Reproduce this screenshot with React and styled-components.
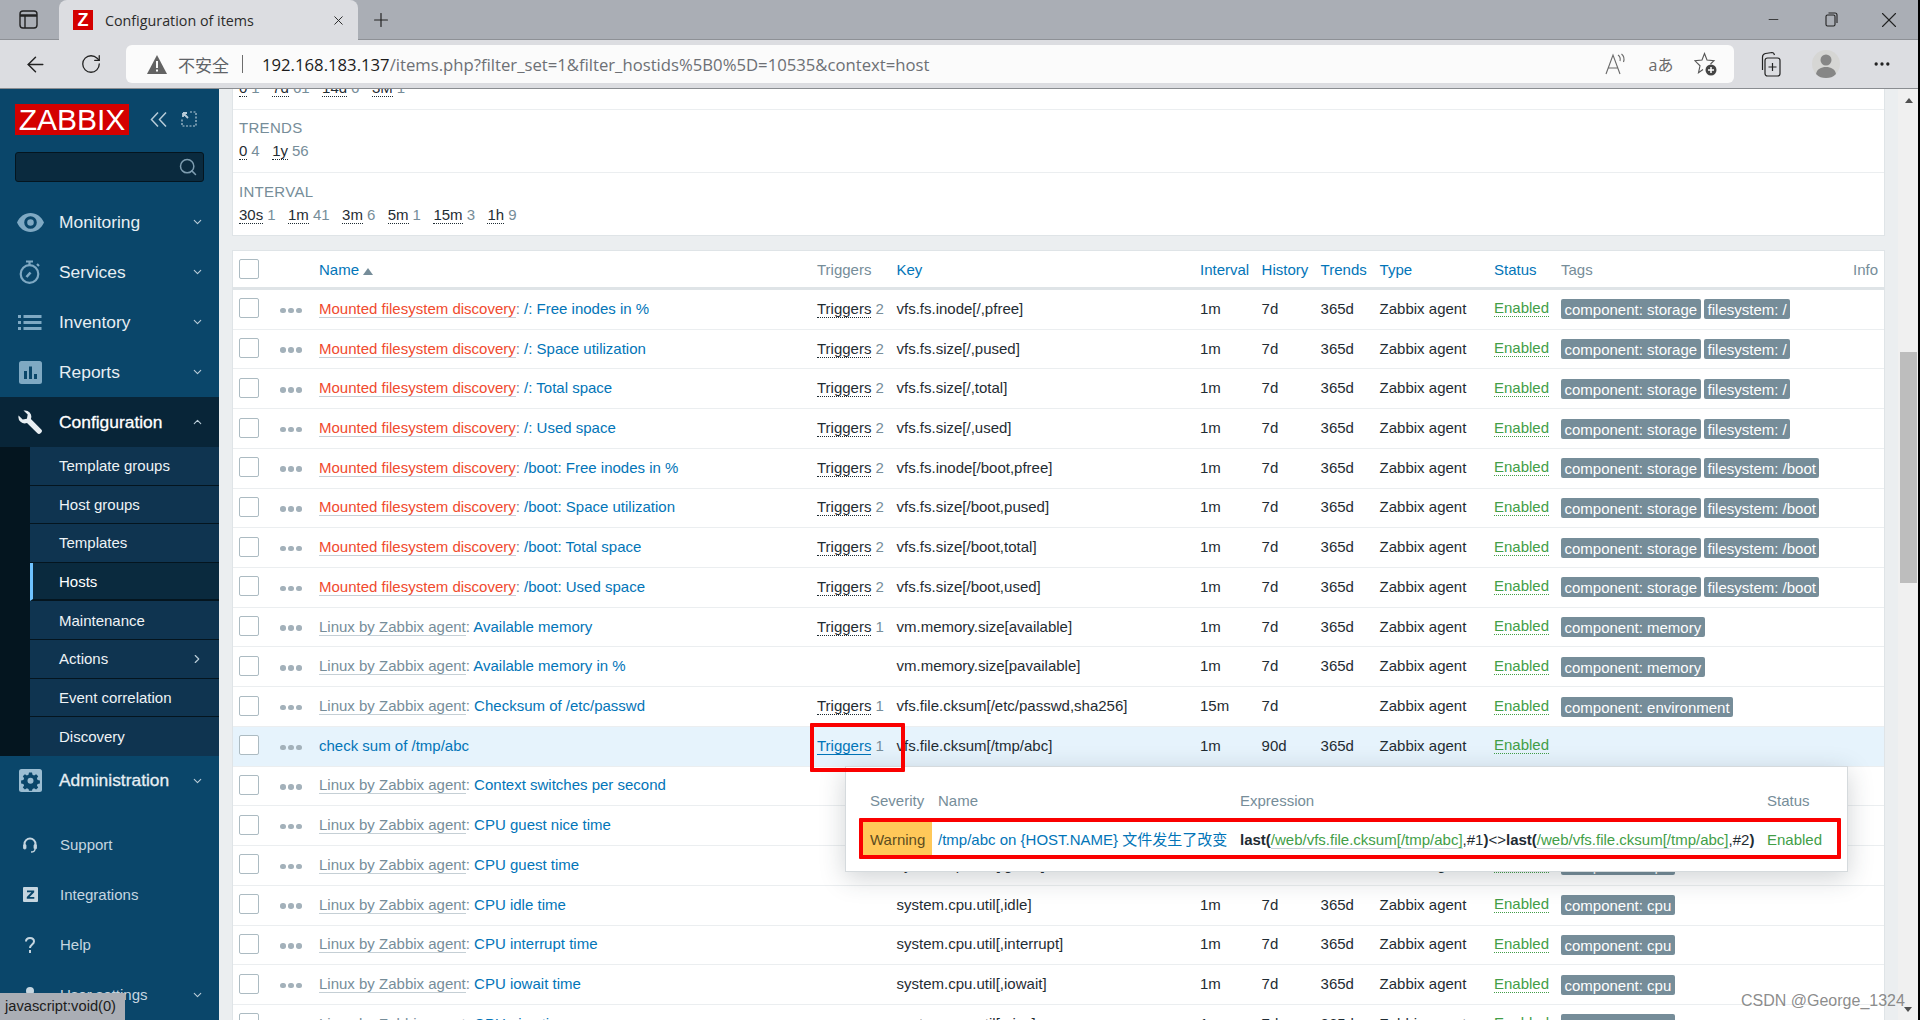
import React from "react";
import styled, { createGlobalStyle } from "styled-components";
import { ArrowLeft, RotateCw, MoreHorizontal, Plus, X, Minus, ChevronDown, ChevronUp, ChevronRight, Search } from "lucide-react";

const GlobalStyle = createGlobalStyle`
  html, body { margin: 0; padding: 0; height: 100%; overflow: hidden; }
  * { box-sizing: border-box; }
  body { font-family: "Liberation Sans", Arial, sans-serif; font-size: 15px; color: #1f2c33; }
`;

const CJK = `"Noto Sans CJK SC", sans-serif`;

const Page = styled.div`
  position: relative;
  width: 1920px;
  height: 1020px;
  overflow: hidden;
  display: flex;
  flex-direction: column;
  border-right: 2px solid #000;
`;

/* browser chrome */
const TabStrip = styled.div`
  height: 40px;
  background: #aaaeb5;
  border-bottom: 1px solid #8e9196;
  display: flex;
  align-items: stretch;
  flex-shrink: 0;
`;
const TabActions = styled.div`
  width: 59px;
  display: flex;
  align-items: center;
  justify-content: center;
  padding-right: 2px;
`;
const Tab = styled.div`
  width: 299px;
  height: 40px;
  background: #dcdde1;
  border-radius: 8px 8px 0 0;
  display: flex;
  align-items: center;
  padding: 0 12px 0 14px;
  font-family: "Open Sans", sans-serif;
  font-size: 14.3px;
  color: #2b2b2b;
`;
const Favicon = styled.div`
  width: 20px;
  height: 20px;
  background: #d40000;
  color: #fff;
  font: 700 18px/20px "Liberation Sans", sans-serif;
  text-align: center;
  margin-right: 12px;
`;
const TabTitle = styled.span`
  flex: 1;
`;
const NewTab = styled.div`
  width: 46px;
  display: flex;
  align-items: center;
  justify-content: center;
`;
const Grow = styled.div`
  flex: 1;
`;
const WinButton = styled.div`
  width: 58px;
  display: flex;
  align-items: center;
  justify-content: center;
`;
const Toolbar = styled.div`
  height: 49px;
  background: #dcdde1;
  border-bottom: 1px solid #8a8d91;
  display: flex;
  align-items: flex-start;
  padding: 5px 8px 0 8px;
  flex-shrink: 0;
`;
const ToolButton = styled.div`
  width: ${(p) => p.$w || 55}px;
  height: 38px;
  display: flex;
  align-items: center;
  justify-content: center;
  flex-shrink: 0;
`;
const AddressBar = styled.div`
  width: 1608px;
  height: 38px;
  margin-left: 8px;
  margin-right: 8px;
  background: #fbfbfb;
  border-radius: 6px;
  display: flex;
  align-items: center;
  padding-left: 21px;
  padding-right: 7px;
`;
const Insecure = styled.span`
  font-family: "Open Sans", ${CJK};
  font-size: 17px;
  color: #5f6368;
  margin-left: 11px;
`;
const AddrSep = styled.div`
  width: 1px;
  height: 18px;
  background: #6d6d6d;
  margin: 0 19px 0 13px;
`;
const Url = styled.div`
  font-family: "Open Sans", sans-serif;
  font-size: 16.7px;
  color: #6d7075;
  white-space: nowrap;
  flex: 1;
  b { font-weight: 400; color: #1c1c1c; }
`;
const AddrIcon = styled.div`
  width: 44px;
  height: 38px;
  display: flex;
  align-items: center;
  justify-content: center;
  color: #6a6a6a;
  font-family: "Open Sans", ${CJK};
  font-size: 16px;
`;

/* layout */
const Body = styled.div`
  flex: 1;
  display: flex;
  min-height: 0;
`;

/* sidebar */
const Sidebar = styled.aside`
  width: 219px;
  flex-shrink: 0;
  background: #0a466a;
  padding-top: 15px;
  display: flex;
  flex-direction: column;
`;
const LogoRow = styled.div`
  height: 30px;
  display: flex;
  align-items: center;
  padding-left: 15px;
`;
const Logo = styled.div`
  width: 114px;
  height: 31px;
  background: #d40000;
  color: #fff;
  font-size: 30px;
  line-height: 31px;
  text-align: center;
  margin-right: 21px;
`;
const LogoIcon = styled.svg`
  display: block;
  margin-right: 14px;
`;
const SearchBox = styled.div`
  width: 189px;
  height: 30px;
  margin: 18px 0 15px 15px;
  background: #0a2a3e;
  border: 1px solid #04151f;
  border-radius: 3px;
  display: flex;
  align-items: center;
  justify-content: flex-end;
  padding-right: 5px;
  color: #7e9db0;
`;
const NavItem = styled.div`
  height: 50px;
  display: flex;
  align-items: center;
  padding-left: 59px;
  position: relative;
  font-size: 17.4px;
  color: ${(p) => (p.$active ? "#fff" : "#e6eef3")};
  background: ${(p) => (p.$active ? "#082538" : "transparent")};
  -webkit-text-stroke: ${(p) => (p.$bold ? "0.3px" : "0")};
`;
const NavIcon = styled.div`
  position: absolute;
  left: 0;
  top: 0;
  width: 60px;
  height: 50px;
  display: flex;
  align-items: center;
  justify-content: center;
  color: ${(p) => p.$color || "#7fa9c3"};
`;
const Chevron = styled.div`
  position: absolute;
  right: 15px;
  top: 50%;
  transform: translateY(-50%);
  display: flex;
  color: #b9ccd8;
`;
const SubNav = styled.div`
  background: #04151f;
  padding-left: 30px;
`;
const SubItem = styled.div`
  height: 38.6px;
  display: flex;
  align-items: center;
  padding-left: 29px;
  position: relative;
  font-size: 15px;
  color: ${(p) => (p.$active ? "#fff" : "#eef3f6")};
  background: ${(p) => (p.$active ? "#0a2a3e" : "#0f3450")};
  border-bottom: 1px solid #04151f;
  &:last-child { border-bottom: 0; }
  ${(p) => p.$active && "border-left: 3px solid #6fc3ff; padding-left: 26px; border-bottom-width: 2px;"}
`;
const SubChevron = styled.div`
  position: absolute;
  right: 15px;
  top: 50%;
  transform: translateY(-50%);
  display: flex;
  color: #b9ccd8;
`;
const UtilNav = styled.div`
  margin-top: 14px;
`;
const UtilItem = styled.div`
  height: 50px;
  display: flex;
  align-items: center;
  padding-left: 60px;
  position: relative;
  font-size: 15px;
  color: #c6d6e0;
`;

/* content */
const Main = styled.main`
  flex: 1;
  min-width: 0;
  background: #ebeef0;
  padding: 0 13px;
  overflow: hidden;
`;
const Panel = styled.section`
  background: #fff;
  border: 1px solid #dfe4e7;
  border-top: ${(p) => (p.$flushTop ? "0" : "1px solid #dfe4e7")};
`;
const FilterPanel = styled(Panel)`
  height: 147px;
  margin-bottom: 14px;
`;
const FilterBlock = styled.div`
  height: ${(p) => p.$h}px;
  padding: 0 6px 13px;
  overflow: hidden;
  display: flex;
  flex-direction: column;
  justify-content: flex-end;
  border-bottom: ${(p) => (p.$last ? "0" : "1px solid #ebeef0")};
`;
const FilterTitle = styled.div`
  font-size: 15px;
  line-height: 17px;
  color: #768d99;
  margin-bottom: 6px;
  letter-spacing: 0.3px;
`;
const FilterValues = styled.div`
  display: flex;
  gap: 12.5px;
  line-height: 17px;
  flex-shrink: 0;
`;
const FilterValue = styled.span`
  color: #768d99;
`;
const DottedLabel = styled.span`
  color: #1f2c33;
  border-bottom: 1px dotted #1f2c33;
  margin-right: 4px;
`;
const TablePanel = styled(Panel)`
  border-bottom: 0;
`;
const Row = styled.div`
  height: ${(p) => (p.$head ? "39px" : "39.72px")};
  display: grid;
  grid-template-columns: 41px 39px 498px 79.5px 303.5px 61.6px 59px 59px 114.4px 67px 292px 1fr;
  align-items: center;
  padding-left: 6px;
  padding-bottom: ${(p) => (p.$head ? "0" : "2px")};
  background: ${(p) => (p.$hover ? "#e6f3fc" : "transparent")};
  border-bottom: ${(p) => (p.$head ? "3px solid #dfe4e7" : "1px solid #ebeef0")};
  line-height: 17px;
  white-space: nowrap;
`;
const Check = styled.div`
  width: 20px;
  height: 20px;
  background: #fff;
  border: 1px solid #acbbc2;
  border-radius: 2px;
`;
const Dots = styled.div`
  display: flex;
  gap: 2.5px;
  padding-top: 4px;
  span {
    width: 5.5px;
    height: 5.5px;
    border-radius: 50%;
    background: #a3b1ba;
  }
`;
const HeadLink = styled.span`
  color: ${(p) => (p.$muted ? "#768d99" : "#0275b8")};
`;
const SortArrow = styled.span`
  display: inline-block;
  width: 0;
  height: 0;
  margin-left: 4px;
  border-left: 5px solid transparent;
  border-right: 5px solid transparent;
  border-bottom: 7px solid #768d99;
`;
const NameCell = styled.div`
  color: #0275b8;
`;
const Prefix = styled.span`
  color: ${(p) => (p.$red ? "#f04a2e" : "#768d99")};
  border-bottom: 1px solid #c5cfd5;
`;
const Colon = styled.span`
  color: #768d99;
`;
const TrigLabel = styled.span`
  color: ${(p) => (p.$hover ? "#0275b8" : "#1f2c33")};
  border-bottom: 1px ${(p) => (p.$hover ? "solid #0275b8" : "dotted #1f2c33")};
`;
const Muted = styled.span`
  color: #768d99;
  margin-left: 4px;
`;
const Status = styled.span`
  color: #429e47;
  border-bottom: 1px dotted #429e47;
  justify-self: start;
`;
const Tags = styled.div`
  display: flex;
  gap: 3.5px;
  margin-top: 2px;
`;
const Tag = styled.span`
  height: 20px;
  padding: 0 3.5px;
  line-height: 21px;
  border-radius: 2px;
  background: #768d99;
  color: #fff;
`;

/* scrollbar */
const ScrollTrack = styled.div`
  width: 20px;
  flex-shrink: 0;
  background: #f0f0f0;
  display: flex;
  flex-direction: column;
  align-items: flex-end;
  padding-right: 1px;
`;
const ScrollArrow = styled.div`
  width: 0;
  height: 0;
  margin: ${(p) => p.$m};
  border-left: 4.5px solid transparent;
  border-right: 4.5px solid transparent;
  ${(p) => (p.$down ? "border-top: 5px solid #505050;" : "border-bottom: 5px solid #505050;")}
`;
const ScrollThumb = styled.div`
  width: 17px;
  height: 231px;
  margin-top: 249px;
  background: #bdbdbd;
`;

/* floating parts */
const Popup = styled.div`
  position: absolute;
  left: 845px;
  top: 766px;
  width: 1003px;
  height: 106px;
  background: #fff;
  border: 1px solid #d5dadd;
  box-shadow: 0 6px 24px rgba(40, 55, 65, 0.22);
  padding: 23px 0 0 16px;
`;
const PopupGrid = styled.div`
  display: grid;
  grid-template-columns: 76px 302px 527px 1fr;
  line-height: 22px;
  white-space: nowrap;
`;
const PopHead = styled.div`
  color: #768d99;
  padding-left: ${(p) => p.$pad || 0}px;
`;
const PopCell = styled.div`
  margin-top: 10px;
  height: 33px;
  line-height: 36px;
  color: ${(p) => p.$color || "#1f2c33"};
  font-family: "Liberation Sans", ${CJK};
`;
const Severity = styled(PopCell)`
  width: 70px;
  background: #ffc859;
  color: #5d4d1f;
  padding-left: 8px;
`;
const ItemLink = styled.span`
  color: #429e47;
  border-bottom: 1px solid #c5cfd5;
`;
const Mark = styled.div`
  position: absolute;
  left: ${(p) => p.$x}px;
  top: ${(p) => p.$y}px;
  width: ${(p) => p.$w}px;
  height: ${(p) => p.$h}px;
  border: 4px solid #fa0000;
  border-radius: 1px;
`;
const StatusBubble = styled.div`
  position: absolute;
  left: 0;
  bottom: 0;
  width: 125px;
  height: 27px;
  background: #aaaeb5;
  padding-left: 5px;
  font-size: 14.7px;
  line-height: 27px;
  color: #1c1c1c;
  white-space: nowrap;
`;
const Watermark = styled.div`
  position: absolute;
  left: 1741px;
  top: 990px;
  font-size: 16px;
  line-height: 22px;
  color: rgba(110, 110, 110, 0.8);
  white-space: nowrap;
`;

const mounted = "Mounted filesystem discovery";
const linux = "Linux by Zabbix agent";
const disk = (name, key, tag2) => ({ prefix: mounted, red: true, name, trig: 2, key, tags: ["component: storage", tag2] });
const cpu = (name, key) => ({ prefix: linux, name, key, tags: ["component: cpu"] });

const rows = [
  disk("/: Free inodes in %", "vfs.fs.inode[/,pfree]", "filesystem: /"),
  disk("/: Space utilization", "vfs.fs.size[/,pused]", "filesystem: /"),
  disk("/: Total space", "vfs.fs.size[/,total]", "filesystem: /"),
  disk("/: Used space", "vfs.fs.size[/,used]", "filesystem: /"),
  disk("/boot: Free inodes in %", "vfs.fs.inode[/boot,pfree]", "filesystem: /boot"),
  disk("/boot: Space utilization", "vfs.fs.size[/boot,pused]", "filesystem: /boot"),
  disk("/boot: Total space", "vfs.fs.size[/boot,total]", "filesystem: /boot"),
  disk("/boot: Used space", "vfs.fs.size[/boot,used]", "filesystem: /boot"),
  { prefix: linux, name: "Available memory", trig: 1, key: "vm.memory.size[available]", tags: ["component: memory"] },
  { prefix: linux, name: "Available memory in %", key: "vm.memory.size[pavailable]", tags: ["component: memory"] },
  { prefix: linux, name: "Checksum of /etc/passwd", trig: 1, key: "vfs.file.cksum[/etc/passwd,sha256]", interval: "15m", trends: "", tags: ["component: environment"] },
  { name: "check sum of /tmp/abc", trig: 1, key: "vfs.file.cksum[/tmp/abc]", history: "90d", tags: [], hover: true },
  { prefix: linux, name: "Context switches per second", key: "system.cpu.switches", tags: ["component: cpu"] },
  cpu("CPU guest nice time", "system.cpu.util[,guest_nice]"),
  cpu("CPU guest time", "system.cpu.util[,guest]"),
  cpu("CPU idle time", "system.cpu.util[,idle]"),
  cpu("CPU interrupt time", "system.cpu.util[,interrupt]"),
  cpu("CPU iowait time", "system.cpu.util[,iowait]"),
  cpu("CPU nice time", "system.cpu.util[,nice]"),
];

const filterRow = (items) => (
  <FilterValues>
    {items.map(([label, count]) => (
      <FilterValue key={label}>
        <DottedLabel>{label}</DottedLabel>
        {count}
      </FilterValue>
    ))}
  </FilterValues>
);

const EyeIcon = () => (
  <svg width="27" height="19" viewBox="0 0 27 19" fill="currentColor">
    <path fillRule="evenodd" d="M13.5 0C7.5 0 2.6 3.8 0 9.5 2.6 15.2 7.5 19 13.5 19S24.4 15.2 27 9.5C24.4 3.8 19.500 0 13.500 0Zm0 3.200a6.300 6.300 0 1 1 0 12.600 6.300 6.300 0 0 1 0-12.600Zm0 3a3.300 3.300 0 1 0 0 6.600 3.300 3.300 0 0 0 0-6.600Z" />
  </svg>
);
const TimerIcon = () => (
  <svg width="22" height="24" viewBox="0 0 22 24" fill="none" stroke="currentColor" strokeWidth="2.200">
    <circle cx="10.500" cy="14" r="8.800" />
    <path d="M7 1.500h7M10.500 1.500v3.500M18 4l2 2" />
    <path d="M7.500 17l4-4.500" strokeWidth="2.600" />
  </svg>
);
const ListIcon = () => (
  <svg width="24" height="15" viewBox="0 0 24 15" fill="currentColor">
    <rect x="0" y="0" width="3" height="3" /><rect x="5.500" y="0" width="18" height="3" />
    <rect x="0" y="6" width="3" height="3" /><rect x="5.500" y="6" width="18" height="3" />
    <rect x="0" y="12" width="3" height="3" /><rect x="5.500" y="12" width="18" height="3" />
  </svg>
);
const ChartIcon = () => (
  <svg width="23" height="23" viewBox="0 0 23 23">
    <rect width="23" height="23" rx="2.500" fill="currentColor" />
    <rect x="5" y="10" width="3" height="8" fill="#0a466a" />
    <rect x="10" y="5.500" width="3" height="12.500" fill="#0a466a" />
    <rect x="15" y="13" width="3" height="5" fill="#0a466a" />
  </svg>
);
const WrenchIcon = () => (
  <svg width="24" height="24" viewBox="0 0 24 24" fill="currentColor">
    <path d="M5.500.6a6.300 6.300 0 0 1 7.400 8.300L23.300 19.400a2.300 2.300 0 0 1 0 3.100l-.8.800a2.300 2.300 0 0 1-3.100 0L9 12.900A6.300 6.300 0 0 1 .6 5.500L4.700 9.500l4.200-.8.800-4.200Z" />
  </svg>
);
const GearSquareIcon = () => (
  <svg width="23" height="23" viewBox="0 0 23 23">
    <rect width="23" height="23" rx="2.500" fill="currentColor" />
    <path fill="#0a466a" fillRule="evenodd" d="M10 3.500h3l.5 2.300 1.600.7 2-1.300 2.100 2.100-1.300 2 .7 1.600 2.300.5v3l-2.300.5-.7 1.600 1.300 2-2.100 2.100-2-1.300-1.600.7-.5 1.800h-3l-.5-1.800-1.600-.7-2 1.300-2.100-2.100 1.300-2-.7-1.600-2.300-.5v-3l2.300-.5.700-1.600-1.300-2 2.100-2.100 2 1.300 1.600-.7Zm1.500 5.300a3 3 0 1 0 0 6 3 3 0 0 0 0-6Z" />
  </svg>
);
const HeadsetIcon = () => (
  <svg width="14" height="16" viewBox="0 0 14 16" fill="none" stroke="currentColor" strokeWidth="2">
    <path d="M1.500 9V7a5.500 5.500 0 0 1 11 0v2" />
    <rect x="0.500" y="7.500" width="2.500" height="4.500" rx="1" fill="currentColor" strokeWidth="0.800" />
    <rect x="11" y="7.500" width="2.500" height="4.500" rx="1" fill="currentColor" strokeWidth="0.800" />
    <path d="M12 12c0 2-1.500 3-4 3" strokeWidth="1.300" />
  </svg>
);
const ZIcon = () => (
  <svg width="15" height="15" viewBox="0 0 15 15">
    <rect width="15" height="15" rx="1" fill="currentColor" />
    <path d="M4 3.500h7.200v1.800L6.600 10h4.700v1.700H3.800V9.900l4.600-4.700H4Z" fill="#0a466a" />
  </svg>
);
const HelpIcon = () => (
  <svg width="10" height="16" viewBox="0 0 10 16" fill="none" stroke="currentColor" strokeWidth="2">
    <path d="M1 4.500C1 2.500 2.700 1 5 1s4 1.500 4 3.500c0 3-4 3-4 6.500" />
    <path d="M5 13v3" />
  </svg>
);
const UserIcon = () => (
  <svg width="14" height="16" viewBox="0 0 14 16" fill="currentColor">
    <circle cx="7" cy="4" r="4" />
    <path d="M0 16c0-4 3-6 7-6s7 2 7 6Z" />
  </svg>
);

const WindowIcon = () => (
  <svg width="19" height="19" viewBox="0 0 19 19" fill="none" stroke="#222" strokeWidth="1.400">
    <rect x="1" y="1" width="17" height="17" rx="3" />
    <path d="M1 5.500h17" strokeWidth="2.500" />
    <path d="M6 5.500V18" />
  </svg>
);
const RestoreIcon = () => (
  <svg width="13" height="15" viewBox="0 0 13 15" fill="none" stroke="#222" strokeWidth="1.100">
    <rect x="1" y="3" width="9" height="11" rx="1.500" />
    <path d="M3.500 1h6.500a2 2 0 0 1 2 2v8" />
  </svg>
);
const WarnIcon = () => (
  <svg width="20" height="19" viewBox="0 0 20 19">
    <path d="M10 0l10 19H0Z" fill="#636363" />
    <rect x="9" y="6" width="2" height="7" fill="#fbfbfb" />
    <rect x="9" y="14.500" width="2" height="2" fill="#fbfbfb" />
  </svg>
);
const ReadIcon = () => (
  <svg width="24" height="22" viewBox="0 0 24 22" fill="none" stroke="#6a6a6a" strokeWidth="1.100">
    <path d="M1 21L8 2l7 19M3.500 15h9" />
    <path d="M13 2c2 1.500 2.500 4 2 6M16.500 1c2.500 2 3 5 2 8" />
  </svg>
);
const FavIcon = () => (
  <svg width="23" height="24" viewBox="0 0 23 24" fill="none" stroke="#555" strokeWidth="1.100">
    <path d="M9 17.500L4.500 20.800 6 13.800 1 8.800 8 8 10.500 1.500 13 8 20 8.700 16.500 12" />
    <circle cx="17" cy="18" r="5.500" fill="#444" stroke="none" />
    <path d="M17 15v6M14 18h6" stroke="#fff" strokeWidth="1.500" />
  </svg>
);
const CollectionsIcon = () => (
  <svg width="23" height="26" viewBox="0 0 23 26" fill="none" stroke="#222" strokeWidth="1.200">
    <rect x="6" y="7" width="15" height="18" rx="2.500" />
    <path d="M13.500 12v8M9.500 16h8" />
    <path d="M3.500 19V6c0-2 1-3 3-3.500L13 1.500c1.500 0 2 .5 2.500 2.500" />
  </svg>
);
const ProfileIcon = () => (
  <svg width="28" height="28" viewBox="0 0 28 28">
    <circle cx="14" cy="14" r="14" fill="#d6d6d4" />
    <circle cx="14" cy="10" r="5.500" fill="#868686" />
    <path d="M4 24c1-5 5-7 10-7s9 2 10 7c-3 3-6 4-10 4s-7-1-10-4Z" fill="#868686" />
  </svg>
);

const Chev = ({ up }) => (
  <Chevron>{up ? <ChevronUp size={13} strokeWidth={2} /> : <ChevronDown size={13} strokeWidth={2} />}</Chevron>
);

export default function App() {
  return (
    <>
      <GlobalStyle />
      <Page>
        <TabStrip>
          <TabActions><WindowIcon /></TabActions>
          <Tab>
            <Favicon>Z</Favicon>
            <TabTitle>Configuration of items</TabTitle>
            <X size={15} strokeWidth={1.5} color="#222" />
          </Tab>
          <NewTab><Plus size={22} strokeWidth={1.300} color="#222" /></NewTab>
          <Grow />
          <WinButton><Minus size={15} strokeWidth={1.300} color="#222" /></WinButton>
          <WinButton><RestoreIcon /></WinButton>
          <WinButton><X size={26} strokeWidth={1} color="#222" /></WinButton>
        </TabStrip>
        <Toolbar>
          <ToolButton><ArrowLeft size={25} strokeWidth={1.400} color="#222" /></ToolButton>
          <ToolButton><RotateCw size={22} strokeWidth={1.400} color="#222" /></ToolButton>
          <AddressBar>
            <WarnIcon />
            <Insecure>不安全</Insecure>
            <AddrSep />
            <Url><b>192.168.183.137</b>/items.php?filter_set=1&amp;filter_hostids%5B0%5D=10535&amp;context=host</Url>
            <AddrIcon><ReadIcon /></AddrIcon>
            <AddrIcon>aあ</AddrIcon>
            <AddrIcon><FavIcon /></AddrIcon>
          </AddressBar>
          <ToolButton $w={56}><CollectionsIcon /></ToolButton>
          <ToolButton $w={56}><ProfileIcon /></ToolButton>
          <ToolButton $w={56}><MoreHorizontal size={20} strokeWidth={2} color="#222" /></ToolButton>
        </Toolbar>

        <Body>
          <Sidebar>
            <LogoRow>
              <Logo>ZABBIX</Logo>
              <LogoIcon width="17" height="15" viewBox="0 0 17 15" fill="none" stroke="#b7cbd8" strokeWidth="1.500">
                <path d="M8 0.500L1.500 7.500 8 14.500M16 0.500L9.500 7.500 16 14.500" />
              </LogoIcon>
              <LogoIcon width="16" height="16" viewBox="0 0 16 16" fill="none" stroke="#b7cbd8" strokeWidth="1.200">
                <path d="M9 1h6v14H1V8" strokeDasharray="2 1.500" />
                <path d="M2 2l5 5M2 2h4M2 2v4" strokeWidth="1.800" />
              </LogoIcon>
            </LogoRow>
            <SearchBox><Search size={20} strokeWidth={1.800} /></SearchBox>
            <NavItem><NavIcon><EyeIcon /></NavIcon>Monitoring<Chev /></NavItem>
            <NavItem><NavIcon><TimerIcon /></NavIcon>Services<Chev /></NavItem>
            <NavItem><NavIcon><ListIcon /></NavIcon>Inventory<Chev /></NavItem>
            <NavItem><NavIcon><ChartIcon /></NavIcon>Reports<Chev /></NavItem>
            <NavItem $active $bold><NavIcon $color="#e8eef2"><WrenchIcon /></NavIcon>Configuration<Chev up /></NavItem>
            <SubNav>
              <SubItem>Template groups</SubItem>
              <SubItem>Host groups</SubItem>
              <SubItem>Templates</SubItem>
              <SubItem $active>Hosts</SubItem>
              <SubItem>Maintenance</SubItem>
              <SubItem>Actions<SubChevron><ChevronRight size={14} strokeWidth={2} /></SubChevron></SubItem>
              <SubItem>Event correlation</SubItem>
              <SubItem>Discovery</SubItem>
            </SubNav>
            <NavItem $bold><NavIcon $color="#9bbdd2"><GearSquareIcon /></NavIcon>Administration<Chev /></NavItem>
            <UtilNav>
              <UtilItem><NavIcon $color="#c6d6e0"><HeadsetIcon /></NavIcon>Support</UtilItem>
              <UtilItem><NavIcon $color="#c6d6e0"><ZIcon /></NavIcon>Integrations</UtilItem>
              <UtilItem><NavIcon $color="#c6d6e0"><HelpIcon /></NavIcon>Help</UtilItem>
              <UtilItem><NavIcon $color="#c6d6e0"><UserIcon /></NavIcon>User settings<Chev /></UtilItem>
            </UtilNav>
          </Sidebar>

          <Main>
            <FilterPanel $flushTop>
              <FilterBlock $h={21}>
                {filterRow([["0", 1], ["7d", 61], ["14d", 6], ["3M", 1]])}
              </FilterBlock>
              <FilterBlock $h={63}>
                <FilterTitle>TRENDS</FilterTitle>
                {filterRow([["0", 4], ["1y", 56]])}
              </FilterBlock>
              <FilterBlock $h={63} $last>
                <FilterTitle>INTERVAL</FilterTitle>
                {filterRow([["30s", 1], ["1m", 41], ["3m", 6], ["5m", 1], ["15m", 3], ["1h", 9]])}
              </FilterBlock>
            </FilterPanel>

            <TablePanel>
              <Row $head>
                <Check />
                <span />
                <HeadLink>Name<SortArrow /></HeadLink>
                <HeadLink $muted>Triggers</HeadLink>
                <HeadLink>Key</HeadLink>
                <HeadLink>Interval</HeadLink>
                <HeadLink>History</HeadLink>
                <HeadLink>Trends</HeadLink>
                <HeadLink>Type</HeadLink>
                <HeadLink>Status</HeadLink>
                <HeadLink $muted>Tags</HeadLink>
                <HeadLink $muted>Info</HeadLink>
              </Row>
              {rows.map((r) => (
                <Row key={r.name} $hover={r.hover}>
                  <Check />
                  <Dots><span /><span /><span /></Dots>
                  <NameCell>
                    {r.prefix && <><Prefix $red={r.red}>{r.prefix}</Prefix><Colon>: </Colon></>}
                    {r.name}
                  </NameCell>
                  <div>
                    {r.trig && <><TrigLabel $hover={r.hover}>Triggers</TrigLabel><Muted>{r.trig}</Muted></>}
                  </div>
                  <div>{r.key}</div>
                  <div>{r.interval || "1m"}</div>
                  <div>{r.history || "7d"}</div>
                  <div>{r.trends === "" ? "" : "365d"}</div>
                  <div>Zabbix agent</div>
                  <Status>Enabled</Status>
                  <Tags>{r.tags.map((t) => <Tag key={t}>{t}</Tag>)}</Tags>
                  <span />
                </Row>
              ))}
            </TablePanel>
          </Main>

          <ScrollTrack>
            <ScrollArrow $m="9px 4px 0 0" />
            <ScrollThumb />
            <Grow />
            <ScrollArrow $down $m="0 5px 8px 0" />
          </ScrollTrack>
        </Body>

        <Popup>
          <PopupGrid>
            <PopHead $pad={8}>Severity</PopHead>
            <PopHead>Name</PopHead>
            <PopHead>Expression</PopHead>
            <PopHead>Status</PopHead>
            <Severity>Warning</Severity>
            <PopCell $color="#0275b8">/tmp/abc on {"{HOST.NAME}"} 文件发生了改变</PopCell>
            <PopCell>
              <b>last(</b><ItemLink>/web/vfs.file.cksum[/tmp/abc]</ItemLink>,#1<b>)</b>&lt;&gt;<b>last(</b><ItemLink>/web/vfs.file.cksum[/tmp/abc]</ItemLink>,#2<b>)</b>
            </PopCell>
            <PopCell $color="#429e47">Enabled</PopCell>
          </PopupGrid>
        </Popup>
        <Mark $x={810} $y={723} $w={95} $h={49} />
        <Mark $x={859} $y={818} $w={982} $h={41} />
        <StatusBubble>javascript:void(0)</StatusBubble>
        <Watermark>CSDN @George_1324</Watermark>
      </Page>
    </>
  );
}
